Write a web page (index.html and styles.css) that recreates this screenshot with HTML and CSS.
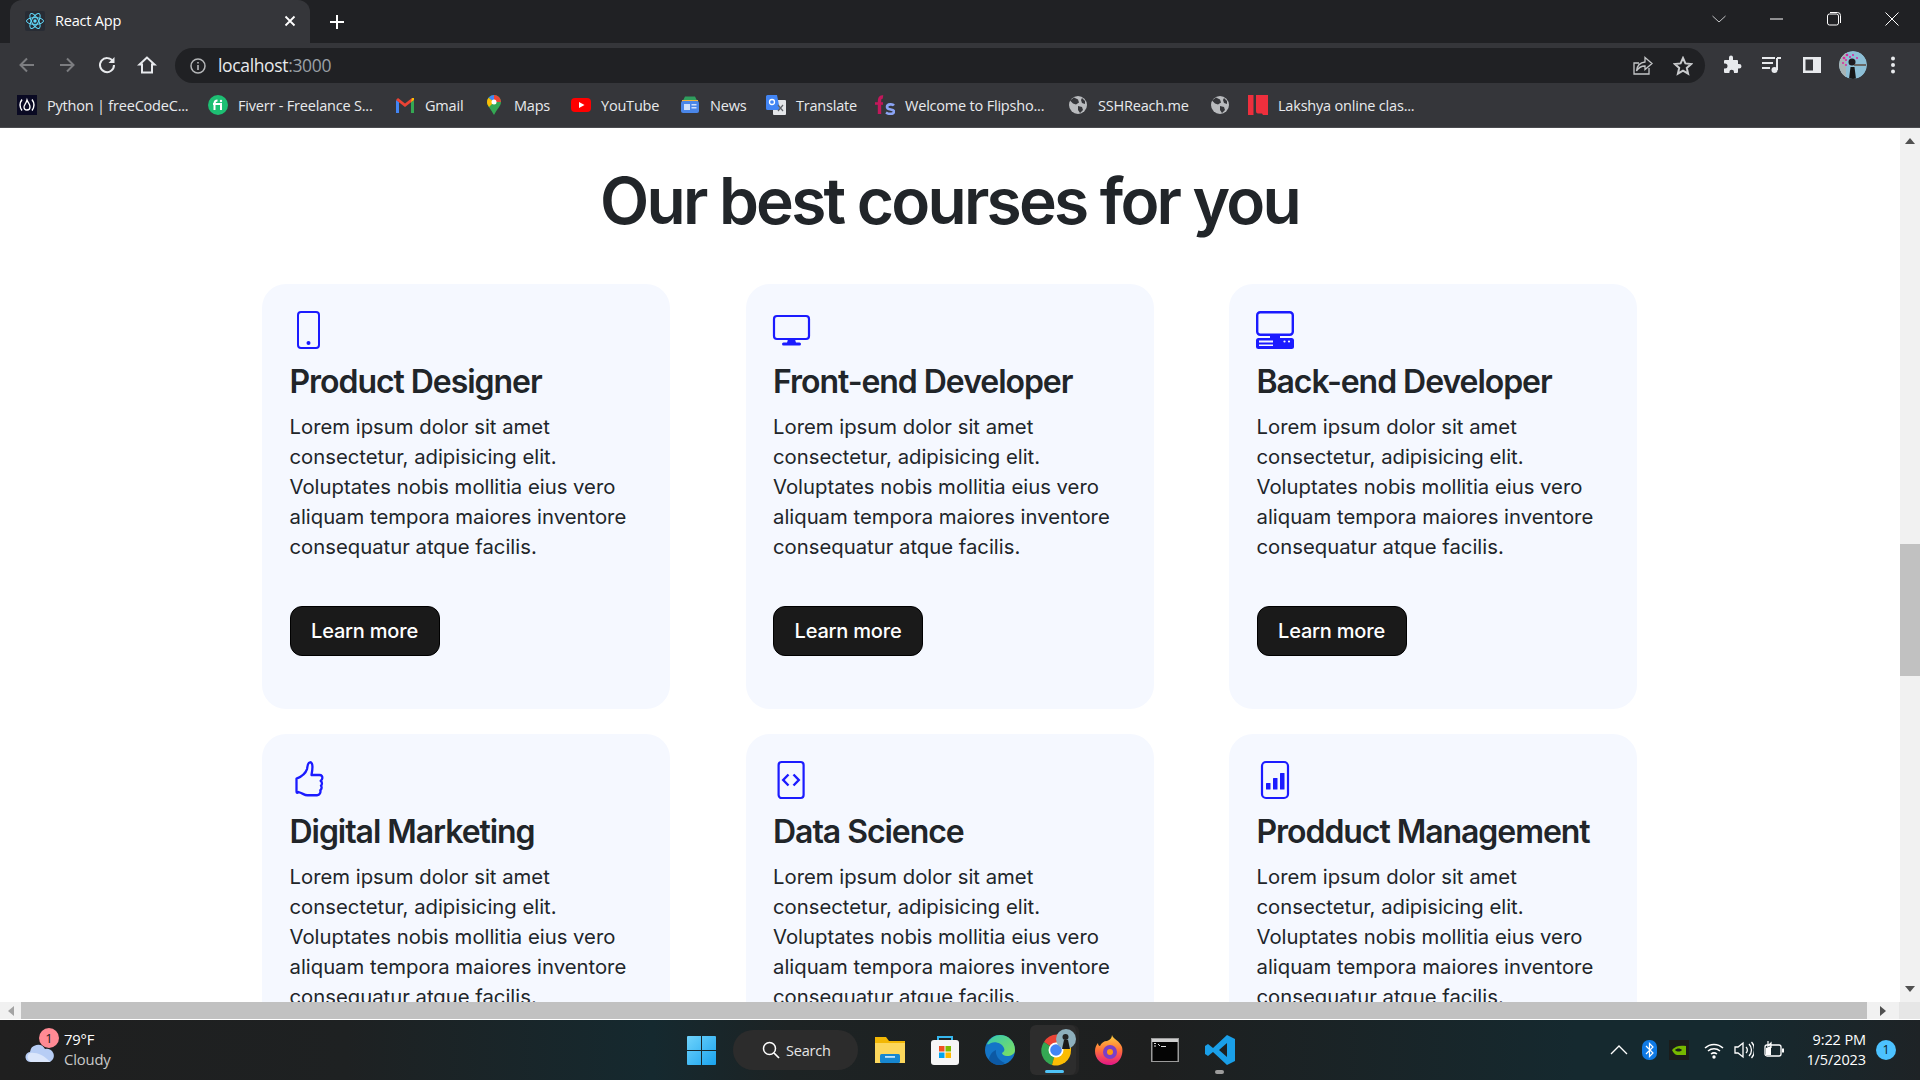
FILE: index.html
```html
<!DOCTYPE html>
<html lang="en">
<head>
<meta charset="utf-8">
<title>React App</title>
<link rel="stylesheet" href="styles.css">
</head>
<body>
<div class="screen">
  <header class="chrome">
    <div class="tabstrip">
      <div class="tab">
        <svg class="fav-react" viewBox="0 0 20 20"><rect width="20" height="20" rx="2" fill="#282c34"/><g fill="none" stroke="#61dafb" stroke-width="1"><ellipse cx="10" cy="10" rx="8.5" ry="3.4"/><ellipse cx="10" cy="10" rx="8.5" ry="3.4" transform="rotate(60 10 10)"/><ellipse cx="10" cy="10" rx="8.5" ry="3.4" transform="rotate(120 10 10)"/></g><circle cx="10" cy="10" r="1.7" fill="#61dafb"/></svg>
        <span class="tab-title">React App</span>
        <svg class="tab-close" viewBox="0 0 12 12"><path d="M1.5 1.5l9 9M10.500 1.500l-9 9" stroke="#fff" stroke-width="1.800" fill="none"/></svg>
      </div>
      <svg class="tab-new" viewBox="0 0 16 16"><path d="M8 1v14M1 8h14" stroke="#fff" stroke-width="2" fill="none"/></svg>
      <div class="winctl">
        <svg class="win-chev" viewBox="0 0 14 8"><path d="M.5 1l6.500 6 6.500-6" stroke="#c4c5c7" stroke-width="1" fill="none"/></svg>
        <svg class="win-min" viewBox="0 0 14 14"><path d="M0 7h13" stroke="#fff" stroke-width="1" fill="none"/></svg>
        <svg class="win-max" viewBox="0 0 14 14"><rect x=".5" y="2" width="11" height="11" rx="2" stroke="#fff" fill="none"/><path d="M3 .5h7.500a3 3 0 0 1 3 3V11" stroke="#fff" fill="none"/></svg>
        <svg class="win-close" viewBox="0 0 14 14"><path d="M.5.5l13 13M13.500.5l-13 13" stroke="#fff" stroke-width="1" fill="none"/></svg>
      </div>
    </div>
    <div class="toolbar">
      <svg class="nav" viewBox="0 0 20 20"><path d="M17 10H4M10 3.500L3.500 10l6.500 6.500" stroke="#7c7d80" stroke-width="2" fill="none"/></svg>
      <svg class="nav" viewBox="0 0 20 20"><path d="M3 10h13M10 3.500l6.500 6.500-6.500 6.500" stroke="#7c7d80" stroke-width="2" fill="none"/></svg>
      <svg class="nav" viewBox="0 0 20 20"><path d="M16 6.500A7 7 0 1 0 17 10" stroke="#e8eaed" stroke-width="2" fill="none"/><path d="M17.500 2v6h-6z" fill="#e8eaed"/></svg>
      <svg class="nav" viewBox="0 0 20 20"><path d="M10 2.500L2.500 9.500H5v8h10v-8h2.500z" stroke="#e8eaed" stroke-width="2" fill="none"/></svg>
      <div class="omnibox">
        <svg class="omni-info" viewBox="0 0 16 16"><circle cx="8" cy="8" r="7" stroke="#b4b6b8" stroke-width="1.500" fill="none"/><path d="M8 7v5M8 4v1.600" stroke="#b4b6b8" stroke-width="1.600" fill="none"/></svg>
        <span class="url">localhost<span class="url-port">:3000</span></span>
        <svg class="omni-share" viewBox="0 0 20 20"><path d="M16 12v6H1V7h5" stroke="#c4c6c8" stroke-width="1.300" fill="none"/><path d="M12 1.500l7 6-7 6V10c-4 0-6.500 1.500-8.500 5 .5-5 3.500-8.500 8.500-9z" stroke="#c4c6c8" stroke-width="1.300" fill="none"/></svg>
        <svg class="omni-star" viewBox="0 0 20 20"><path d="M10 2l2.400 5.400 5.800.6-4.400 3.900 1.300 5.800-5.100-3-5.100 3 1.300-5.800L1.800 8l5.800-.6z" stroke="#c9cbcd" stroke-width="2" fill="none"/></svg>
      </div>
      <svg class="tool" viewBox="0 0 20 20"><path d="M7 2.500a2 2 0 0 1 4 0V5h4a1 1 0 0 1 1 1v3h1.200a2.300 2.300 0 0 1 0 4.600H16v3.400a1 1 0 0 1-1 1h-3v-1a2.300 2.300 0 0 0-4.600 0v1H3a1 1 0 0 1-1-1v-3.500h1a2.500 2.500 0 0 0 0-5H2V6a1 1 0 0 1 1-1h4z" fill="#e8eaed"/></svg>
      <svg class="tool" viewBox="0 0 20 20"><path d="M0 3h13M0 8h11M0 13h8" stroke="#e8eaed" stroke-width="1.800" fill="none"/><path d="M15 3h4M15 3v12" stroke="#e8eaed" stroke-width="2" fill="none"/><circle cx="12.500" cy="15" r="3" fill="#e8eaed"/></svg>
      <svg class="tool" viewBox="0 0 20 20"><path d="M1 2h18v16H1zM3.500 4.500v11H11v-11z" fill="#e8eaed" fill-rule="evenodd"/></svg>
      <svg class="avatar" viewBox="0 0 28 28"><clipPath id="av"><circle cx="14" cy="14" r="14"/></clipPath><g clip-path="url(#av)"><rect width="28" height="28" fill="#8dbfd6"/><rect x="0" y="0" width="7" height="28" fill="#a8b4b5"/><path d="M10 28l1.500-12h4l1.500 12z" fill="#161616"/><circle cx="13" cy="11" r="3.500" fill="#1d1a1f"/><path d="M15 14h12" stroke="#5e4a3e" stroke-width="1.500"/><g fill="#d72ba0"><circle cx="5" cy="7" r="1.300"/><circle cx="8" cy="4" r="1.300"/><circle cx="11" cy="6" r="1.100"/><circle cx="14" cy="4" r="1.100"/><circle cx="7" cy="9" r="1.100"/><circle cx="18" cy="7" r="1.100"/><circle cx="4" cy="12" r="1"/><circle cx="7" cy="14" r="1"/></g></g></svg>
      <svg class="dots" viewBox="0 0 6 18"><circle cx="3" cy="2.500" r="2" fill="#e8eaed"/><circle cx="3" cy="9" r="2" fill="#e8eaed"/><circle cx="3" cy="15.500" r="2" fill="#e8eaed"/></svg>
    </div>
    <nav class="bookmarks">
      <div class="bm"><svg class="bm-ico" viewBox="0 0 20 20"><rect width="20" height="20" fill="#0a0a23"/><path d="M5 4.500C2.500 8 2.500 12 5 15.500M15 4.500c2.500 3.500 2.500 7.500 0 11" stroke="#fff" stroke-width="1.400" fill="none"/><path d="M10 5c1 3 3 4 3 7a3 3 0 0 1-6 0c0-2 2-3 3-7z" stroke="#fff" stroke-width="1.300" fill="none"/></svg><span>Python | freeCodeC...</span></div>
      <div class="bm"><svg class="bm-ico" viewBox="0 0 20 20"><circle cx="10" cy="10" r="10" fill="#1dbf73"/><path d="M6.500 15V8.500c0-2 1-3 3-3M5 9h8v6" stroke="#fff" stroke-width="2" fill="none"/><circle cx="13" cy="6" r="1.200" fill="#fff"/></svg><span>Fiverr - Freelance S...</span></div>
      <div class="bm"><svg class="bm-ico" viewBox="0 0 20 20"><path d="M1 18V5l3 2v11z" fill="#4285f4"/><path d="M16 18V7l3-2v13z" fill="#34a853"/><path d="M1 5l9 7 9-7-2-2-7 5.500L3 3z" fill="#ea4335"/><path d="M16 7l3-2V3h-2z" fill="#fbbc04"/></svg><span>Gmail</span></div>
      <div class="bm"><svg class="bm-ico-narrow" viewBox="0 0 14 20"><path d="M7 0a7 7 0 0 1 7 7c0 4-4 7-7 13C4 14 0 11 0 7a7 7 0 0 1 7-7z" fill="#34a853"/><path d="M7 0a7 7 0 0 0-5.500 2.700L7 7z" fill="#4285f4"/><path d="M7 0a7 7 0 0 1 7 7H7z" fill="#ea4335"/><path d="M0 7c0 2 1 3.500 2 5l5-5-5.500-4.300A7 7 0 0 0 0 7z" fill="#fbbc04"/><circle cx="7" cy="7" r="2.500" fill="#fff"/></svg><span>Maps</span></div>
      <div class="bm"><svg class="bm-ico" viewBox="0 0 20 20"><rect y="3" width="20" height="14" rx="4" fill="#f00"/><path d="M8 7l5.500 3L8 13z" fill="#fff"/></svg><span>YouTube</span></div>
      <div class="bm"><svg class="bm-ico" viewBox="0 0 20 20"><path d="M5 1.500h10l3 6H2z" fill="#2f9e5d"/><path d="M2 7h16v-2H2z" fill="#f3b33d"/><rect x="1" y="6" width="18" height="12" rx="2" fill="#4a86e8"/><rect x="4" y="9" width="6" height="6" fill="#cfe0fb"/><rect x="11.500" y="9" width="5" height="1.500" fill="#cfe0fb"/><rect x="11.500" y="12" width="5" height="1.500" fill="#cfe0fb"/></svg><span>News</span></div>
      <div class="bm"><svg class="bm-ico" viewBox="0 0 20 20"><rect x="7" y="5" width="13" height="15" rx="1" fill="#e4e6e9"/><path d="M1.500 0h9.500l3 15H1.500A1.500 1.500 0 0 1 0 13.500V1.500A1.500 1.500 0 0 1 1.500 0z" fill="#4285f4"/><circle cx="6" cy="7" r="2.500" stroke="#fff" stroke-width="1.300" fill="none"/><path d="M12 10l5 6M17 10l-5 6" stroke="#5f6368" stroke-width="1.200"/></svg><span>Translate</span></div>
      <div class="bm"><svg class="bm-ico" viewBox="0 0 20 20"><path d="M8 2C5 1.500 4.500 4 4.500 6v13" stroke="#c2185b" stroke-width="3.400" fill="none"/><path d="M0 8.500h8" stroke="#c2185b" stroke-width="2.600"/><path d="M19 10.500c-1-1.500-7-2-7 1.500s7 1.500 7 4.500-5 3-8 1" stroke="#8ba4f5" stroke-width="2.600" fill="none"/></svg><span>Welcome to Flipsho...</span></div>
      <div class="bm"><svg class="bm-ico" viewBox="0 0 20 20"><circle cx="10" cy="10" r="9" fill="#b9bbbe"/><path d="M6 2.500l4 2 1 3-3 2-3-1-3-3zM10 11l4 1 1 3-3 3-2-3zM14 3l3 3v3l-3-1-1-3z" fill="#35363a"/></svg><span>SSHReach.me</span></div>
      <div class="bm"><svg class="bm-ico" viewBox="0 0 20 20"><circle cx="10" cy="10" r="9" fill="#b9bbbe"/><path d="M6 2.500l4 2 1 3-3 2-3-1-3-3zM10 11l4 1 1 3-3 3-2-3zM14 3l3 3v3l-3-1-1-3z" fill="#35363a"/></svg></div>
      <div class="bm"><svg class="bm-ico" viewBox="0 0 20 20"><path d="M0 0h5.500v20H0z" fill="#ee2f3d"/><path d="M8 0h12v20h-5l-1-1.500h-4C8.500 18.500 8 17 8 16z" fill="#ee2f3d"/></svg><span>Lakshya online clas...</span></div>
    </nav>
  </header>

  <div class="viewport">
    <main class="page">
      <h1 class="page-title">Our best courses for you</h1>
      <section class="cards">
        <article class="card">
          <svg class="card-ico" viewBox="0 0 40 40"><rect x="8" y="2" width="21" height="36" rx="3" stroke="#1b1bff" stroke-width="2" fill="none"/><circle cx="18.500" cy="33" r="2" fill="#1b1bff"/></svg>
          <h2 class="card-title">Product Designer</h2>
          <p class="card-text">Lorem ipsum dolor sit amet consectetur, adipisicing elit. Voluptates nobis mollitia eius vero aliquam tempora maiores inventore consequatur atque facilis.</p>
          <button class="card-btn">Learn more</button>
        </article>
        <article class="card">
          <svg class="card-ico" viewBox="0 0 40 40"><rect x="1" y="6" width="35" height="23" rx="3" stroke="#1b1bff" stroke-width="2.200" fill="none"/><path d="M15 29h7l1 4H14z" fill="#1b1bff"/><rect x="9" y="32.500" width="19" height="3" rx="1.500" fill="#1b1bff"/></svg>
          <h2 class="card-title">Front-end Developer</h2>
          <p class="card-text">Lorem ipsum dolor sit amet consectetur, adipisicing elit. Voluptates nobis mollitia eius vero aliquam tempora maiores inventore consequatur atque facilis.</p>
          <button class="card-btn">Learn more</button>
        </article>
        <article class="card">
          <svg class="card-ico" viewBox="0 0 40 40"><rect x=".2" y="2.200" width="35.600" height="22.600" rx="3" stroke="#1b1bff" stroke-width="2.400" fill="none"/><rect x="13" y="24" width="10" height="5" fill="#1b1bff"/><rect x="-1" y="28" width="38" height="11" rx="2.500" fill="#1b1bff"/><rect x="2" y="30.500" width="14" height="2" fill="#f5f8ff"/><rect x="2" y="34.500" width="14" height="1.500" fill="#f5f8ff"/><circle cx="27.500" cy="31.500" r="1.100" fill="#f5f8ff"/><circle cx="32" cy="31.500" r="1.100" fill="#f5f8ff"/></svg>
          <h2 class="card-title">Back-end Developer</h2>
          <p class="card-text">Lorem ipsum dolor sit amet consectetur, adipisicing elit. Voluptates nobis mollitia eius vero aliquam tempora maiores inventore consequatur atque facilis.</p>
          <button class="card-btn">Learn more</button>
        </article>
        <article class="card">
          <svg class="card-ico" viewBox="0 0 40 40"><path transform="translate(1.500 0) scale(1 1.07)" d="M5 17.500c5-2 9-4.500 10.500-9 .6-2 .3-6 3-6.300 3.500-.3 2.500 7 1.500 11.800h8c2.300 0 3 1.500 2.800 3-.1 1.200-.6 2-1.600 2.500 1.600 1 1.600 3.500.3 4.500 1 1.200.8 3.200-.7 4.200.6 2-.4 4.500-3.300 4.800H16c-3.500 0-5-2.300-9-3C5 31.300 5 30 5 28.500z" stroke="#1b1bff" stroke-width="2.300" fill="none" stroke-linejoin="round"/></svg>
          <h2 class="card-title">Digital Marketing</h2>
          <p class="card-text">Lorem ipsum dolor sit amet consectetur, adipisicing elit. Voluptates nobis mollitia eius vero aliquam tempora maiores inventore consequatur atque facilis.</p>
          <button class="card-btn">Learn more</button>
        </article>
        <article class="card">
          <svg class="card-ico" viewBox="0 0 40 40"><rect x="5.600" y="2" width="25" height="36" rx="3" stroke="#1b1bff" stroke-width="2.200" fill="none"/><path d="M15.500 14.500L10.200 20l5.300 5.500M20.500 14.500l5.300 5.500-5.300 5.500" stroke="#1b1bff" stroke-width="2.400" fill="none"/></svg>
          <h2 class="card-title">Data Science</h2>
          <p class="card-text">Lorem ipsum dolor sit amet consectetur, adipisicing elit. Voluptates nobis mollitia eius vero aliquam tempora maiores inventore consequatur atque facilis.</p>
          <button class="card-btn">Learn more</button>
        </article>
        <article class="card">
          <svg class="card-ico" viewBox="0 0 40 40"><rect x="5" y="2" width="26" height="36" rx="4" stroke="#1b1bff" stroke-width="2.200" fill="none"/><rect x="9" y="23" width="4.500" height="6.500" rx=".5" fill="#1b1bff"/><rect x="16" y="18" width="4.500" height="11.500" rx=".5" fill="#1b1bff"/><rect x="23" y="13" width="4.500" height="16.500" rx=".5" fill="#1b1bff"/></svg>
          <h2 class="card-title">Prodduct Management</h2>
          <p class="card-text">Lorem ipsum dolor sit amet consectetur, adipisicing elit. Voluptates nobis mollitia eius vero aliquam tempora maiores inventore consequatur atque facilis.</p>
          <button class="card-btn">Learn more</button>
        </article>
      </section>
    </main>
    <div class="vbar">
      <span class="vbar-up"></span>
      <div class="vbar-track"><div class="vbar-thumb"></div></div>
      <span class="vbar-down"></span>
    </div>
  </div>

  <div class="hbar">
    <span class="hbar-left"></span>
    <div class="hbar-thumb"></div>
    <span class="hbar-right"></span>
    <span class="hbar-corner"></span>
  </div>

  <footer class="taskbar">
    <div class="weather">
      <div class="weather-ico">
        <svg class="cloud" viewBox="0 0 30 22"><path d="M6 21a5 5 0 0 1-1-10 8 8 0 0 1 15-3 7 7 0 0 1 5 13z" fill="#b7cdf5"/><path d="M6 21a5 5 0 0 1-1-9c6-1 14 2 20 9z" fill="#dbe6fb"/></svg>
        <span class="weather-badge">1</span>
      </div>
      <div class="weather-text"><span class="temp">79°F</span><span class="cond">Cloudy</span></div>
    </div>
    <div class="dock">
      <svg class="winlogo" viewBox="0 0 29 29"><defs><linearGradient id="wl" x1="0" y1="0" x2="1" y2="1"><stop offset="0" stop-color="#6fd3fb"/><stop offset="1" stop-color="#1aa3ee"/></linearGradient></defs><path d="M0 1a1 1 0 0 1 1-1h13v14H0zM15 0h13a1 1 0 0 1 1 1v13H15zM0 15h14v14H1a1 1 0 0 1-1-1zM15 15h14v13a1 1 0 0 1-1 1H15z" fill="url(#wl)"/></svg>
      <div class="search-pill">
        <svg class="search-ico" viewBox="0 0 18 18"><circle cx="7.500" cy="7.500" r="6" stroke="#fff" stroke-width="1.500" fill="none"/><path d="M12 12l5 5" stroke="#fff" stroke-width="1.700"/></svg>
        <span>Search</span>
      </div>
      <div class="slot"><svg class="app" viewBox="0 0 30 30"><path d="M0 2h11l3 4h16v22H0z" fill="#f2b705"/><path d="M0 8h30v20H0z" fill="#fcd75c"/><rect x="5" y="19" width="20" height="9" rx="1.500" fill="#1787d0"/><rect x="10" y="21" width="10" height="1.800" fill="#bfe4fa"/></svg></div>
      <div class="slot"><svg class="app" viewBox="0 0 30 30"><path d="M8 7V2h14v5" stroke="#36b7ee" stroke-width="2" fill="none"/><rect x="1" y="5" width="28" height="25" rx="3" fill="#f6f6f6"/><rect x="9" y="11" width="5.500" height="5.500" fill="#f25022"/><rect x="15.500" y="11" width="5.500" height="5.500" fill="#7fba00"/><rect x="9" y="17.500" width="5.500" height="5.500" fill="#00a4ef"/><rect x="15.500" y="17.500" width="5.500" height="5.500" fill="#ffb900"/></svg></div>
      <div class="slot"><svg class="app" viewBox="0 0 30 30"><defs><linearGradient id="eg" x1="0" y1="0" x2="1" y2="1"><stop offset="0" stop-color="#36c9b0"/><stop offset="1" stop-color="#7fe05e"/></linearGradient></defs><circle cx="15" cy="15" r="15" fill="#1475c7"/><path d="M2 9C5 3 10 0 15 0c8 0 15 6 15 15 0 4-4 6-8 6-3 0-5-2-5-3 2-1 3-3 2-5-2-5-9-7-13-5-2 1-3 2-4 1z" fill="url(#eg)"/><path d="M11 15c-1 5 3 11 9 13-2 1-3 2-6 2-4 0-8-2-10-6 1-5 4-8 7-9z" fill="#0c59a4"/></svg></div>
      <div class="slot slot-active"><span class="active-stack"></span><svg class="app app-chrome" viewBox="0 0 32 32"><path d="M16 16L4 8a15 15 0 0 1 26 0z" fill="#ea4335"/><path d="M16 16L4 8a15 15 0 0 0 8 23z" fill="#34a853"/><path d="M16 16h15a15 15 0 0 1-19 15z" fill="#fbbc04"/><path d="M16 8h14a15 15 0 0 1 1 8H16z" fill="#fbbc04"/><circle cx="16" cy="16" r="7.500" fill="#fff"/><circle cx="16" cy="16" r="5.800" fill="#4285f4"/></svg><svg class="chrome-avatar" viewBox="0 0 20 20"><circle cx="10" cy="10" r="10" fill="#8dafbc"/><path d="M6 20l2-9h4l2 9z" fill="#1a1a1a"/><circle cx="9.500" cy="8" r="3" fill="#222"/></svg><span class="active-line"></span></div>
      <div class="slot"><svg class="app" viewBox="0 0 30 30"><defs><linearGradient id="ff" x1="0" y1="0" x2="0" y2="1"><stop offset="0" stop-color="#ffd23e"/><stop offset=".5" stop-color="#ff7139"/><stop offset="1" stop-color="#e31587"/></linearGradient></defs><path d="M17 0c1 4 8 6 10 12 2 8-3 18-12 18C6 30 0 24 0 16c0-3 1-6 3-8 0 2 1 3 2 3 1-3 4-5 7-5 3-1 5-3 5-6z" fill="url(#ff)"/><circle cx="15" cy="17" r="7" fill="#7a3fc7"/><circle cx="15" cy="17" r="3" fill="#ff980e"/></svg></div>
      <div class="slot"><svg class="app app-term" viewBox="0 0 28 24"><rect width="28" height="24" fill="#9b9b9b"/><rect x="1" y="1" width="26" height="3" fill="#cfcfcf"/><rect x="1.500" y="4" width="25" height="19" fill="#050505"/><path d="M3 5.500h2M3 8h2M7 6l2 2M10 8.500h5" stroke="#ddd" stroke-width="1"/></svg></div>
      <div class="slot slot-vs"><svg class="app" viewBox="0 0 30 30"><path d="M22 0l8 4v22l-8 4L8 17l-5 4-3-2v-8l3-2 5 4zm0 8l-8 7 8 7z" fill="#1a9fe8"/></svg><span class="vs-dot"></span></div>
    </div>
    <div class="tray">
      <svg class="tray-caret" viewBox="0 0 18 10"><path d="M1 9l8-8 8 8" stroke="#fff" stroke-width="1.300" fill="none"/></svg>
      <svg class="tray-bt" viewBox="0 0 15 20"><rect width="15" height="20" rx="7" fill="#0f7ae5"/><path d="M4 6l7 7-3.500 3.500v-13L11 7l-7 7" stroke="#fff" stroke-width="1.200" fill="none"/></svg>
      <svg class="tray-nv" viewBox="0 0 20 20"><rect width="20" height="20" fill="#1a1c1b"/><path d="M3 10c3-4 8-5 14-4v9H8c-2 0-4-3-5-5z" fill="#76b900"/><path d="M6 10c2-2 5-2 7 0-2 2-5 2-7 0z" fill="#1a1c1b"/></svg>
      <svg class="tray-wifi" viewBox="0 0 20 20"><path d="M1 8a13 13 0 0 1 18 0M4 11a9 9 0 0 1 12 0M7 14a5 5 0 0 1 6 0" stroke="#fff" stroke-width="1.500" fill="none"/><circle cx="10" cy="17" r="1.700" fill="#fff"/></svg>
      <svg class="tray-vol" viewBox="0 0 20 20"><path d="M1 7h3l5-4v14l-5-4H1z" stroke="#fff" stroke-width="1.300" fill="none"/><path d="M12 7a4 4 0 0 1 0 6M15 4a8.500 8.500 0 0 1 0 12M17.500 2a12 12 0 0 1 0 16" stroke="#fff" stroke-width="1.300" fill="none"/></svg>
      <svg class="tray-bat" viewBox="0 0 20 20"><rect x="1" y="5" width="16" height="11" rx="2" stroke="#fff" stroke-width="1.300" fill="none"/><rect x="18" y="8.500" width="2" height="4" fill="#fff"/><path d="M2 15V8l5-2v9z" fill="#fff"/><path d="M4 1v5l3-3v5" stroke="#fff" stroke-width="1.200" fill="none"/></svg>
      <div class="clock"><span>9:22 PM</span><span>1/5/2023</span></div>
      <span class="notif">1</span>
    </div>
  </footer>
</div>
</body>
</html>
```

FILE: styles.css
```css
* { box-sizing: border-box; }
html, body { margin: 0; height: 100%; overflow: hidden; }
body { font-family: "Open Sans", "Noto Sans", sans-serif; background: #fff; }
.screen { width: 1920px; height: 1080px; display: flex; flex-direction: column; }

/* browser chrome */
.chrome { height: 128px; background: #35363a; color: #fff; flex: none; }
.tabstrip { height: 43px; background: #202124; display: flex; align-items: center; padding-left: 10px; }
.tab { width: 300px; height: 43px; background: #35363a; border-radius: 12px 12px 0 0; display: flex; align-items: center; padding: 0 0 2px 15px; }
.fav-react { width: 20px; height: 20px; }
.tab-title { font-size: 14.5px; margin-left: 10px; width: 229px; letter-spacing: -.2px; }
.tab-close { width: 12px; height: 12px; }
.tab-new { width: 16px; height: 16px; margin-left: 19px; margin-top: 1px; }
.winctl { margin-left: auto; display: flex; align-items: center; height: 43px; padding-bottom: 6px; }
.win-chev { width: 14px; height: 8px; margin-right: 44px; }
.win-min { width: 14px; height: 14px; margin-right: 43px; }
.win-max { width: 14px; height: 14px; margin-right: 44px; }
.win-close { width: 14px; height: 14px; margin-right: 21px; }

.toolbar { height: 40px; display: flex; align-items: flex-start; padding: 5px 0 0 17px; }
.nav { width: 20px; height: 20px; margin: 7px 20px 0 0; }
.omnibox { width: 1530px; height: 35px; margin-left: -2px; background: #202124; border-radius: 18px; display: flex; align-items: center; padding: 0 12px 2px 15px; }
.omni-info { width: 16px; height: 16px; margin-top: 2px; }
.url { font-size: 17.500px; margin-left: 12px; color: #e8eaed; letter-spacing: -.35px; }
.url-port { color: #9aa0a6; }
.omni-share { width: 20px; height: 20px; margin: 2px 0 0 auto; }
.omni-star { width: 20px; height: 20px; margin: 2px 0 0 20px; }
.tool { width: 20px; height: 20px; margin: 7px 0 0 20px; }
.omnibox + .tool { margin-left: 17px; }
.avatar { width: 28px; height: 28px; margin: 3px 0 0 17px; border-radius: 50%; }
.dots { width: 6px; height: 18px; margin: 8px 0 0 23px; }

.bookmarks { height: 45px; display: grid; grid-template-columns: 191px 187px 92px 84px 109px 86px 109px 193px 142px 38px 200px; padding-left: 17px; align-items: center; border-bottom: 1px solid #4a4b4f; }
.bm { display: flex; align-items: center; gap: 10px; font-size: 14.500px; letter-spacing: -.2px; white-space: nowrap; color: #e8eaed; }
.bm-ico { width: 20px; height: 20px; flex: none; }
.bm-ico-narrow { width: 14px; height: 20px; flex: none; margin-right: 3px; }

/* page */
.viewport { flex: 1; display: flex; min-height: 0; background: #fff; }
.page { flex: 1; min-width: 0; overflow: hidden; padding-left: 262px; }
.page-title { width: 1375px; margin: 29px 0 39px; font-family: Inter, sans-serif; font-size: 64px; line-height: 88px; font-weight: 600; letter-spacing: -2.760px; color: #212529; text-align: center; }
.cards { width: 1375px; display: grid; grid-template-columns: repeat(3, 408px); column-gap: 75.500px; row-gap: 25px; }
.card { height: 425px; padding: 26px 27.500px 0; background: #f5f8ff; border-radius: 24px; }
.card-ico { display: block; width: 40px; height: 40px; overflow: visible; }
.card-title { margin: 12px 0 0; font-family: Inter, sans-serif; font-size: 32px; line-height: 40px; font-weight: 600; letter-spacing: -1.050px; color: #212529; }
.card-text { margin: 10px 0 0; font-family: Inter, sans-serif; font-size: 20.300px; line-height: 30px; color: #212529; }
.card-btn { display: block; width: 150px; height: 50px; margin-top: 44px; padding: 0; background: #1a1a1a; color: #fff; border: 1px solid #000; border-radius: 12px; font-family: Inter, sans-serif; font-size: 20px; font-weight: 500; letter-spacing: -.2px; }

/* scrollbars */
.vbar { width: 20px; flex: none; background: #f1f1f1; display: flex; flex-direction: column; }
.vbar-up, .vbar-down { height: 26px; flex: none; display: flex; align-items: center; justify-content: center; }
.vbar-up::before { content: ""; border: 5px solid transparent; border-top: 0; border-bottom: 6px solid #505050; }
.vbar-down::before { content: ""; border: 5px solid transparent; border-bottom: 0; border-top: 6px solid #505050; }
.vbar-track { flex: 1; padding-top: 390px; }
.vbar-thumb { height: 132px; background: #c1c1c1; }
.hbar { height: 18px; flex: none; background: #f1f1f1; display: flex; border-bottom: 1px solid #fff; }
.hbar-left, .hbar-right { flex: none; display: flex; align-items: center; justify-content: center; }
.hbar-left { width: 21px; }
.hbar-left::before { content: ""; border: 5px solid transparent; border-left: 0; border-right: 6px solid #a3a3a3; }
.hbar-right::before { content: ""; border: 5px solid transparent; border-right: 0; border-left: 6px solid #505050; }
.hbar-thumb { flex: 1; background: #c1c1c1; }
.hbar-right { width: 32px; }
.hbar-corner { width: 21px; flex: none; background: #e6e6e6; }

/* taskbar */
.taskbar { height: 60px; flex: none; display: flex; align-items: stretch; background: linear-gradient(90deg, #1f1f1f 0, #1e2122 18%, #15292f 34%, #1d2324 41%, #1e1f1f 60%, #15292f 82%, #15292f 90%, #1e2326 100%); color: #fff; }
.weather { width: 687px; display: flex; padding-left: 25px; flex: none; }
.weather-ico { position: relative; width: 30px; height: 60px; display: flex; align-items: flex-end; padding-bottom: 17px; }
.cloud { width: 30px; height: 22px; }
.weather-badge { position: absolute; left: 14px; top: 8px; width: 20px; height: 20px; border-radius: 50%; background: #ff8a94; color: #1a1a1a; font-size: 13px; line-height: 20px; text-align: center; }
.weather-text { display: flex; flex-direction: column; margin-left: 9px; padding-top: 9px; font-size: 14.800px; line-height: 20px; letter-spacing: -.15px; }
.cond { color: #c9c9c9; }
.dock { display: flex; align-items: center; flex: none; }
.winlogo { width: 29px; height: 29px; margin-right: 17px; }
.search-pill { width: 125px; height: 40px; border-radius: 20px; background: #2c2c2c; display: flex; align-items: center; padding-left: 29px; gap: 6px; font-size: 14.500px; color: #e6e6e6; margin-right: 17px; letter-spacing: -.2px; }
.search-ico { width: 18px; height: 18px; }
.slot { position: relative; width: 55px; height: 60px; display: flex; align-items: center; }
.app { width: 30px; height: 30px; }
.app-term { height: 24px; }
.app-chrome { width: 32px; height: 32px; position: relative; }
.active-stack { position: absolute; left: -10px; top: 5px; width: 46px; height: 50px; border-radius: 6px; background: #2d2d2d; box-shadow: 3px 0 0 #262626; }
.chrome-avatar { position: absolute; left: 16px; top: 9px; width: 20px; height: 20px; }
.active-line { position: absolute; left: 5px; top: 50px; width: 19px; height: 3px; border-radius: 2px; background: #4fc3f7; }
.vs-dot { position: absolute; left: 10px; top: 50px; width: 9px; height: 4px; border-radius: 2px; background: #9c9c9c; }
.tray { margin-left: auto; display: flex; align-items: center; position: relative; padding-right: 24px; }
.tray-caret { width: 18px; height: 10px; margin-right: 14px; }
.tray-bt { width: 15px; height: 20px; margin-right: 12px; }
.tray-nv { width: 20px; height: 20px; margin-right: 15px; }
.tray-wifi { width: 20px; height: 20px; margin-right: 10px; }
.tray-vol { width: 20px; height: 20px; margin-right: 10px; }
.tray-bat { width: 20px; height: 20px; margin-right: 24px; }
.clock { display: flex; flex-direction: column; align-items: flex-end; width: 58px; margin-left: 0; font-size: 14.500px; line-height: 20px; letter-spacing: -.1px; white-space: nowrap; }
.notif { width: 20px; height: 20px; margin-left: 10px; border-radius: 50%; background: #4cc2ff; color: #0c1a22; font-size: 12.500px; line-height: 20px; text-align: center; }
```
